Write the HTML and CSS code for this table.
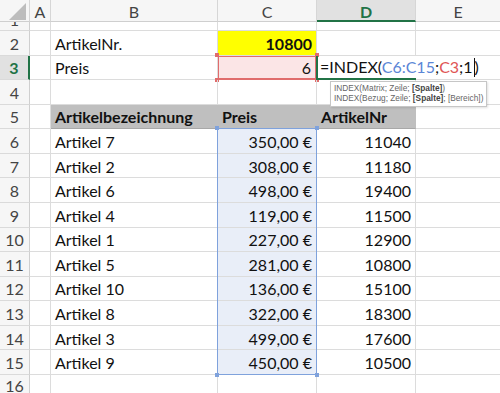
FILE: index.html
```html
<!DOCTYPE html>
<html lang="de">
<head>
<meta charset="utf-8">
<link rel="stylesheet" href="styles.css">
</head>
<body>
<div class="sheet">
  <div class="ch corner"><span class="tri"></span></div>
  <div class="ch">A</div>
  <div class="ch">B</div>
  <div class="ch">C</div>
  <div class="ch ch-active">D</div>
  <div class="ch ch-last">E</div>

  <div class="rh r1"><span>1</span></div>
  <div class="c r1"></div><div class="c r1"></div><div class="c r1"></div><div class="c r1"></div><div class="c r1 last"></div>

  <div class="rh">2</div>
  <div class="c"></div>
  <div class="c">ArtikelNr.</div>
  <div class="c num yellow">10800</div>
  <div class="c"></div>
  <div class="c last"></div>

  <div class="rh rh-active">3</div>
  <div class="c"></div>
  <div class="c">Preis</div>
  <div class="c num pink">6<i class="h tl red"></i><i class="h tr red"></i><i class="h bl red"></i><i class="h br red"></i></div>
  <div class="c edit">
    <span class="formula">=INDEX(<span class="ref-b">C6:C15</span>;<span class="ref-r">C3</span>;1<span class="caret"></span>)</span>
    <div class="tip">
      <div>INDEX(Matrix; Zeile; <b>[Spalte]</b>)</div>
      <div>INDEX(Bezug; Zeile; <b>[Spalte]</b>; [Bereich])</div>
    </div>
  </div>
  <div class="c last e3"></div>

  <div class="rh">4</div>
  <div class="c"></div><div class="c"></div><div class="c"></div><div class="c"></div><div class="c last"></div>

  <div class="rh">5</div>
  <div class="c"></div>
  <div class="c th">Artikelbezeichnung</div>
  <div class="c th">Preis</div>
  <div class="c th">ArtikelNr</div>
  <div class="c last"></div>

  <div class="rh">6</div><div class="c"></div><div class="c">Artikel 7</div><div class="c num sel">350,00 €<div class="range"><i class="h tl blue"></i><i class="h tr blue"></i><i class="h bl blue"></i><i class="h br blue"></i></div></div><div class="c num">11040</div><div class="c last"></div>
  <div class="rh">7</div><div class="c"></div><div class="c">Artikel 2</div><div class="c num sel">308,00 €</div><div class="c num">11180</div><div class="c last"></div>
  <div class="rh">8</div><div class="c"></div><div class="c">Artikel 6</div><div class="c num sel">498,00 €</div><div class="c num">19400</div><div class="c last"></div>
  <div class="rh">9</div><div class="c"></div><div class="c">Artikel 4</div><div class="c num sel">119,00 €</div><div class="c num">11500</div><div class="c last"></div>
  <div class="rh">10</div><div class="c"></div><div class="c">Artikel 1</div><div class="c num sel">227,00 €</div><div class="c num">12900</div><div class="c last"></div>
  <div class="rh">11</div><div class="c"></div><div class="c">Artikel 5</div><div class="c num sel">281,00 €</div><div class="c num">10800</div><div class="c last"></div>
  <div class="rh">12</div><div class="c"></div><div class="c">Artikel 10</div><div class="c num sel">136,00 €</div><div class="c num">15100</div><div class="c last"></div>
  <div class="rh">13</div><div class="c"></div><div class="c">Artikel 8</div><div class="c num sel">322,00 €</div><div class="c num">18300</div><div class="c last"></div>
  <div class="rh">14</div><div class="c"></div><div class="c">Artikel 3</div><div class="c num sel">499,00 €</div><div class="c num">17600</div><div class="c last"></div>
  <div class="rh">15</div><div class="c"></div><div class="c">Artikel 9</div><div class="c num sel">450,00 €</div><div class="c num">10500</div><div class="c last"></div>
  <div class="rh">16</div><div class="c"></div><div class="c"></div><div class="c"></div><div class="c"></div><div class="c last"></div>
</div>
</body>
</html>
```

FILE: styles.css
```css
html, body {
  margin: 0;
  padding: 0;
  background: #fff;
}
.sheet {
  width: 500px;
  height: 393px;
  overflow: hidden;
  display: grid;
  grid-template-columns: 30px 21px 167px 99px 99px 1fr;
  grid-template-rows: 22px 9px repeat(14, 24.57px) 1fr;
  font-family: Lato, "Liberation Sans", sans-serif;
  font-size: 16px;
  color: #111;
}
.ch {
  box-sizing: border-box;
  background: #f6f6f6;
  border-right: 1px solid #d6d6d6;
  border-bottom: 1px solid #cfcfcf;
  display: flex;
  align-items: center;
  justify-content: center;
  color: #444;
  font-size: 16px;
  padding-top: 1px;
}
.ch-last { border-right: none; }
.ch-active {
  background: #e1e1e1;
  color: #217346;
  font-weight: bold;
  border-bottom: 2px solid #217346;
  padding-top: 2px;
}
.corner {
  justify-content: flex-end;
  align-items: flex-end;
  padding: 0 3px 1px 0;
}
.tri {
  width: 0;
  height: 0;
  border-left: 17px solid transparent;
  border-bottom: 17px solid #bdbdbd;
}
.rh {
  box-sizing: border-box;
  background: #f6f6f6;
  border-right: 1px solid #cfcfcf;
  border-bottom: 1px solid #dadada;
  display: flex;
  align-items: center;
  justify-content: center;
  color: #444;
  font-size: 16px;
  padding-top: 1px;
}
.rh.r1 {
  overflow: hidden;
  align-items: flex-end;
  padding: 0;
}
.rh.r1 span {
  line-height: 16px;
  margin-bottom: 2px;
}
.rh-active {
  background: #e1e1e1;
  color: #217346;
  font-weight: bold;
  border-right: 2px solid #217346;
}
.c {
  box-sizing: border-box;
  border-right: 1px solid #dcdcdc;
  border-bottom: 1px solid #dcdcdc;
  display: flex;
  align-items: center;
  padding: 1px 4px 0 4px;
  white-space: nowrap;
  position: relative;
}
.c.last { border-right: none; }
.num { justify-content: flex-end; padding-right: 4px; }
.yellow {
  background: #ffff00;
  font-weight: bold;
}
.pink {
  background: #fbe5e6;
  box-shadow: inset 0 0 0 1px #e06c6c;
  border-color: #e06c6c;
  padding-right: 5px;
}
.th {
  background: #bfbfbf;
  font-weight: bold;
  border-right-color: #bfbfbf;
  border-bottom-color: #a8a8a8;
}
.edit {
  border-right: none;
  border-left: 2px solid #217346;
  border-bottom: 2px solid #217346;
  margin-left: -1px;
  padding-left: 2px;
  overflow: visible;
  z-index: 3;
}
.formula {
  font-size: 16px;
  color: #111;
  position: relative;
}
.ref-b { color: #5b86d6; }
.ref-r { color: #e05555; }
.caret {
  display: inline-block;
  width: 1px;
  height: 19px;
  background: #111;
  vertical-align: -4px;
  margin: 0 0 0 1px;
}
.e3 { background: #fff; }
.tip {
  position: absolute;
  left: 12px;
  top: 25px;
  width: max-content;
  white-space: nowrap;
  box-sizing: border-box;
  background: #fff;
  border: 1px solid #c6c6c6;
  box-shadow: 1px 1px 2px rgba(0,0,0,0.12);
  padding: 1px 3px 2px 3px;
  font-family: "Liberation Sans", sans-serif;
  font-size: 8.3px;
  line-height: 10.5px;
  color: #666;
}
.tip b { color: #444; }
.sel {
  background: #e9eef8;
}
.range {
  position: absolute;
  left: -1px;
  top: -1px;
  width: 100px;
  height: 247px;
  box-sizing: border-box;
  border: 1.5px solid #7fa2dc;
  z-index: 2;
  pointer-events: none;
}
.h {
  position: absolute;
  width: 4px;
  height: 4px;
}
.h.red { background: #e06c6c; }
.h.blue { background: #7fa2dc; }
.tl { left: -3px; top: -3px; }
.tr { right: -3px; top: -3px; }
.bl { left: -3px; bottom: -3px; }
.br { right: -3px; bottom: -3px; }
```
